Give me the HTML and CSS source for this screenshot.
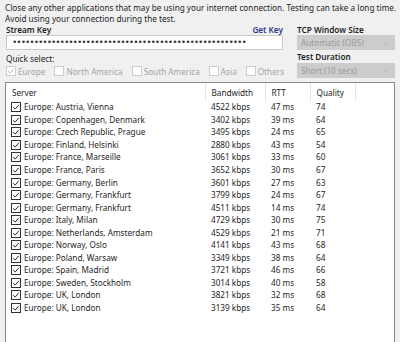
FILE: index.html
```html
<!DOCTYPE html>
<html lang="en">
  <head>
    <title>Bandwidth Test</title>
    <link rel="stylesheet" href="styles.css">
  </head>

  <body>
    <main class="dialog">
      <p class="intro">Close any other applications that may be using your internet connection. Testing can take a long time.<br>Avoid using your connection during the test.</p>

      <div class="settings">
        <div class="left">
          <div class="keyRow">
            <span class="label strong">Stream Key</span>
            <a class="getKey" href="#">Get Key</a>
          </div>
          <div class="input keyField">••••••••••••••••••••••••••••••••••••••••••••••••••••••</div>
          <span class="label quickLabel">Quick select:</span>
          <div class="quick">
            <span class="check disabled checked"><i class="box"><svg viewBox="0 0 10 10"><path d="M1.5 5.2 L4 7.6 L8.6 2.2" /></svg></i>Europe</span>
            <span class="check disabled"><i class="box"></i>North America</span>
            <span class="check disabled"><i class="box"></i>South America</span>
            <span class="check disabled"><i class="box"></i>Asia</span>
            <span class="check disabled"><i class="box"></i>Others</span>
          </div>
        </div>

        <div class="right">
          <span class="label strong">TCP Window Size</span>
          <div class="select">Automatic (OBS)<svg viewBox="0 0 10 6"><path d="M1 1 L5 5 L9 1" /></svg></div>
          <span class="label strong">Test Duration</span>
          <div class="select">Short (10 secs)<svg viewBox="0 0 10 6"><path d="M1 1 L5 5 L9 1" /></svg></div>
        </div>
      </div>

      <!-- Server list -->
      <div class="list">
        <table class="servers">
          <thead>
            <tr>
              <th class="colServer">Server</th>
              <th class="colBw">Bandwidth</th>
              <th class="colRtt">RTT</th>
              <th class="colQ">Quality</th>
              <th class="colRest"></th>
            </tr>
          </thead>
          <tbody>
            <tr><td class="name"><i class="box"><svg viewBox="0 0 10 10"><path d="M1.5 5.2 L4 7.6 L8.6 2.2" /></svg></i>Europe: Austria, Vienna</td><td>4522 kbps</td><td>47 ms</td><td>74</td><td></td></tr>
            <tr><td class="name"><i class="box"><svg viewBox="0 0 10 10"><path d="M1.5 5.2 L4 7.6 L8.6 2.2" /></svg></i>Europe: Copenhagen, Denmark</td><td>3402 kbps</td><td>39 ms</td><td>64</td><td></td></tr>
            <tr><td class="name"><i class="box"><svg viewBox="0 0 10 10"><path d="M1.5 5.2 L4 7.6 L8.6 2.2" /></svg></i>Europe: Czech Republic, Prague</td><td>3495 kbps</td><td>24 ms</td><td>65</td><td></td></tr>
            <tr><td class="name"><i class="box"><svg viewBox="0 0 10 10"><path d="M1.5 5.2 L4 7.6 L8.6 2.2" /></svg></i>Europe: Finland, Helsinki</td><td>2880 kbps</td><td>43 ms</td><td>54</td><td></td></tr>
            <tr><td class="name"><i class="box"><svg viewBox="0 0 10 10"><path d="M1.5 5.2 L4 7.6 L8.6 2.2" /></svg></i>Europe: France, Marseille</td><td>3061 kbps</td><td>33 ms</td><td>60</td><td></td></tr>
            <tr><td class="name"><i class="box"><svg viewBox="0 0 10 10"><path d="M1.5 5.2 L4 7.6 L8.6 2.2" /></svg></i>Europe: France, Paris</td><td>3652 kbps</td><td>30 ms</td><td>67</td><td></td></tr>
            <tr><td class="name"><i class="box"><svg viewBox="0 0 10 10"><path d="M1.5 5.2 L4 7.6 L8.6 2.2" /></svg></i>Europe: Germany, Berlin</td><td>3601 kbps</td><td>27 ms</td><td>63</td><td></td></tr>
            <tr><td class="name"><i class="box"><svg viewBox="0 0 10 10"><path d="M1.5 5.2 L4 7.6 L8.6 2.2" /></svg></i>Europe: Germany, Frankfurt</td><td>3799 kbps</td><td>24 ms</td><td>67</td><td></td></tr>
            <tr><td class="name"><i class="box"><svg viewBox="0 0 10 10"><path d="M1.5 5.2 L4 7.6 L8.6 2.2" /></svg></i>Europe: Germany, Frankfurt</td><td>4511 kbps</td><td>14 ms</td><td>74</td><td></td></tr>
            <tr><td class="name"><i class="box"><svg viewBox="0 0 10 10"><path d="M1.5 5.2 L4 7.6 L8.6 2.2" /></svg></i>Europe: Italy, Milan</td><td>4729 kbps</td><td>30 ms</td><td>75</td><td></td></tr>
            <tr><td class="name"><i class="box"><svg viewBox="0 0 10 10"><path d="M1.5 5.2 L4 7.6 L8.6 2.2" /></svg></i>Europe: Netherlands, Amsterdam</td><td>4529 kbps</td><td>21 ms</td><td>71</td><td></td></tr>
            <tr><td class="name"><i class="box"><svg viewBox="0 0 10 10"><path d="M1.5 5.2 L4 7.6 L8.6 2.2" /></svg></i>Europe: Norway, Oslo</td><td>4141 kbps</td><td>43 ms</td><td>68</td><td></td></tr>
            <tr><td class="name"><i class="box"><svg viewBox="0 0 10 10"><path d="M1.5 5.2 L4 7.6 L8.6 2.2" /></svg></i>Europe: Poland, Warsaw</td><td>3349 kbps</td><td>38 ms</td><td>64</td><td></td></tr>
            <tr><td class="name"><i class="box"><svg viewBox="0 0 10 10"><path d="M1.5 5.2 L4 7.6 L8.6 2.2" /></svg></i>Europe: Spain, Madrid</td><td>3721 kbps</td><td>46 ms</td><td>66</td><td></td></tr>
            <tr><td class="name"><i class="box"><svg viewBox="0 0 10 10"><path d="M1.5 5.2 L4 7.6 L8.6 2.2" /></svg></i>Europe: Sweden, Stockholm</td><td>3014 kbps</td><td>40 ms</td><td>58</td><td></td></tr>
            <tr><td class="name"><i class="box"><svg viewBox="0 0 10 10"><path d="M1.5 5.2 L4 7.6 L8.6 2.2" /></svg></i>Europe: UK, London</td><td>3821 kbps</td><td>32 ms</td><td>68</td><td></td></tr>
            <tr><td class="name"><i class="box"><svg viewBox="0 0 10 10"><path d="M1.5 5.2 L4 7.6 L8.6 2.2" /></svg></i>Europe: UK, London</td><td>3139 kbps</td><td>35 ms</td><td>64</td><td></td></tr>
          </tbody>
        </table>
      </div>
    </main>
  </body>
</html>
```

FILE: styles.css
```css
body {
  margin: 0;
  background: #f0f0f0;
  color: #1e1e1e;
  font-family: "Noto Sans", "Open Sans", sans-serif;
  font-size: 8.2px;
  overflow: hidden;
}
.dialog {
  padding: 2px 5px 0 5px;
}
.intro {
  margin: 0;
  line-height: 11px;
  white-space: nowrap;
}
.settings {
  display: flex;
  gap: 14px;
}
.left {
  display: flex;
  flex-direction: column;
  width: 277px;
  padding-left: 1px;
}
.right {
  display: flex;
  flex-direction: column;
  width: 98px;
}
.label {
  line-height: 11px;
}
.strong {
  font-weight: 600;
}
.keyRow {
  display: flex;
  justify-content: space-between;
}
.getKey {
  color: #2b3a8c;
  text-decoration: none;
  font-weight: 600;
}
.input {
  height: 13px;
  padding: 0 5px;
  border: 1px solid #c9c9c9;
  background: #fff;
  line-height: 13px;
  color: #3a3a3a;
  font-family: "DejaVu Sans Mono", monospace;
  font-size: 9px;
  letter-spacing: -1.09px;
  overflow: hidden;
  white-space: nowrap;
}
.quickLabel {
  margin-top: 3px;
}
.quick {
  display: flex;
  gap: 9px;
  margin-top: 1px;
  height: 12px;
  align-items: center;
  white-space: nowrap;
}
.check {
  display: flex;
  align-items: center;
  gap: 2px;
}
.check.disabled {
  color: #a3a3a3;
}
.box {
  display: inline-flex;
  width: 8px;
  height: 8px;
  border: 1px solid #3c3c3c;
  background: #fff;
}
.box svg {
  width: 8px;
  height: 8px;
  fill: none;
  stroke: #222;
  stroke-width: 1.2;
}
.check.disabled .box {
  border-color: #cdcdcd;
}
.check.disabled .box svg {
  stroke: #b5b5b5;
}
.select {
  display: flex;
  justify-content: space-between;
  align-items: center;
  height: 15px;
  padding: 0 6px 0 4px;
  background: #cccccc;
  color: #9a9a9a;
}
.select svg {
  width: 7px;
  height: 4px;
  fill: none;
  stroke: #b0b0b0;
  stroke-width: 1;
}
.right .select + .label {
  margin-top: 1px;
  margin-bottom: 1px;
}
.list {
  margin-top: 4px;
  height: 270px;
  border: 1px solid #828790;
  background: #fff;
}
.servers {
  border-collapse: collapse;
  table-layout: fixed;
  width: 100%;
}
.servers th,
.servers td {
  box-sizing: border-box;
}
.servers th {
  height: 18px;
  padding: 0 0 0 6px;
  font-weight: normal;
  text-align: left;
  border-right: 1px solid #e5e5e5;
}
.servers th.colRest {
  border-right: none;
}
.colServer {
  width: 199px;
}
.colBw {
  width: 60px;
}
.colRtt {
  width: 45px;
}
.colQ {
  width: 45px;
}
.servers td {
  height: 12.56px;
  padding: 0 0 0 6px;
  line-height: 12px;
  white-space: nowrap;
}
.servers td.name {
  padding-left: 5px;
}
.servers td.name .box {
  margin-right: 3px;
  vertical-align: -1px;
  border-color: #333;
}
```
